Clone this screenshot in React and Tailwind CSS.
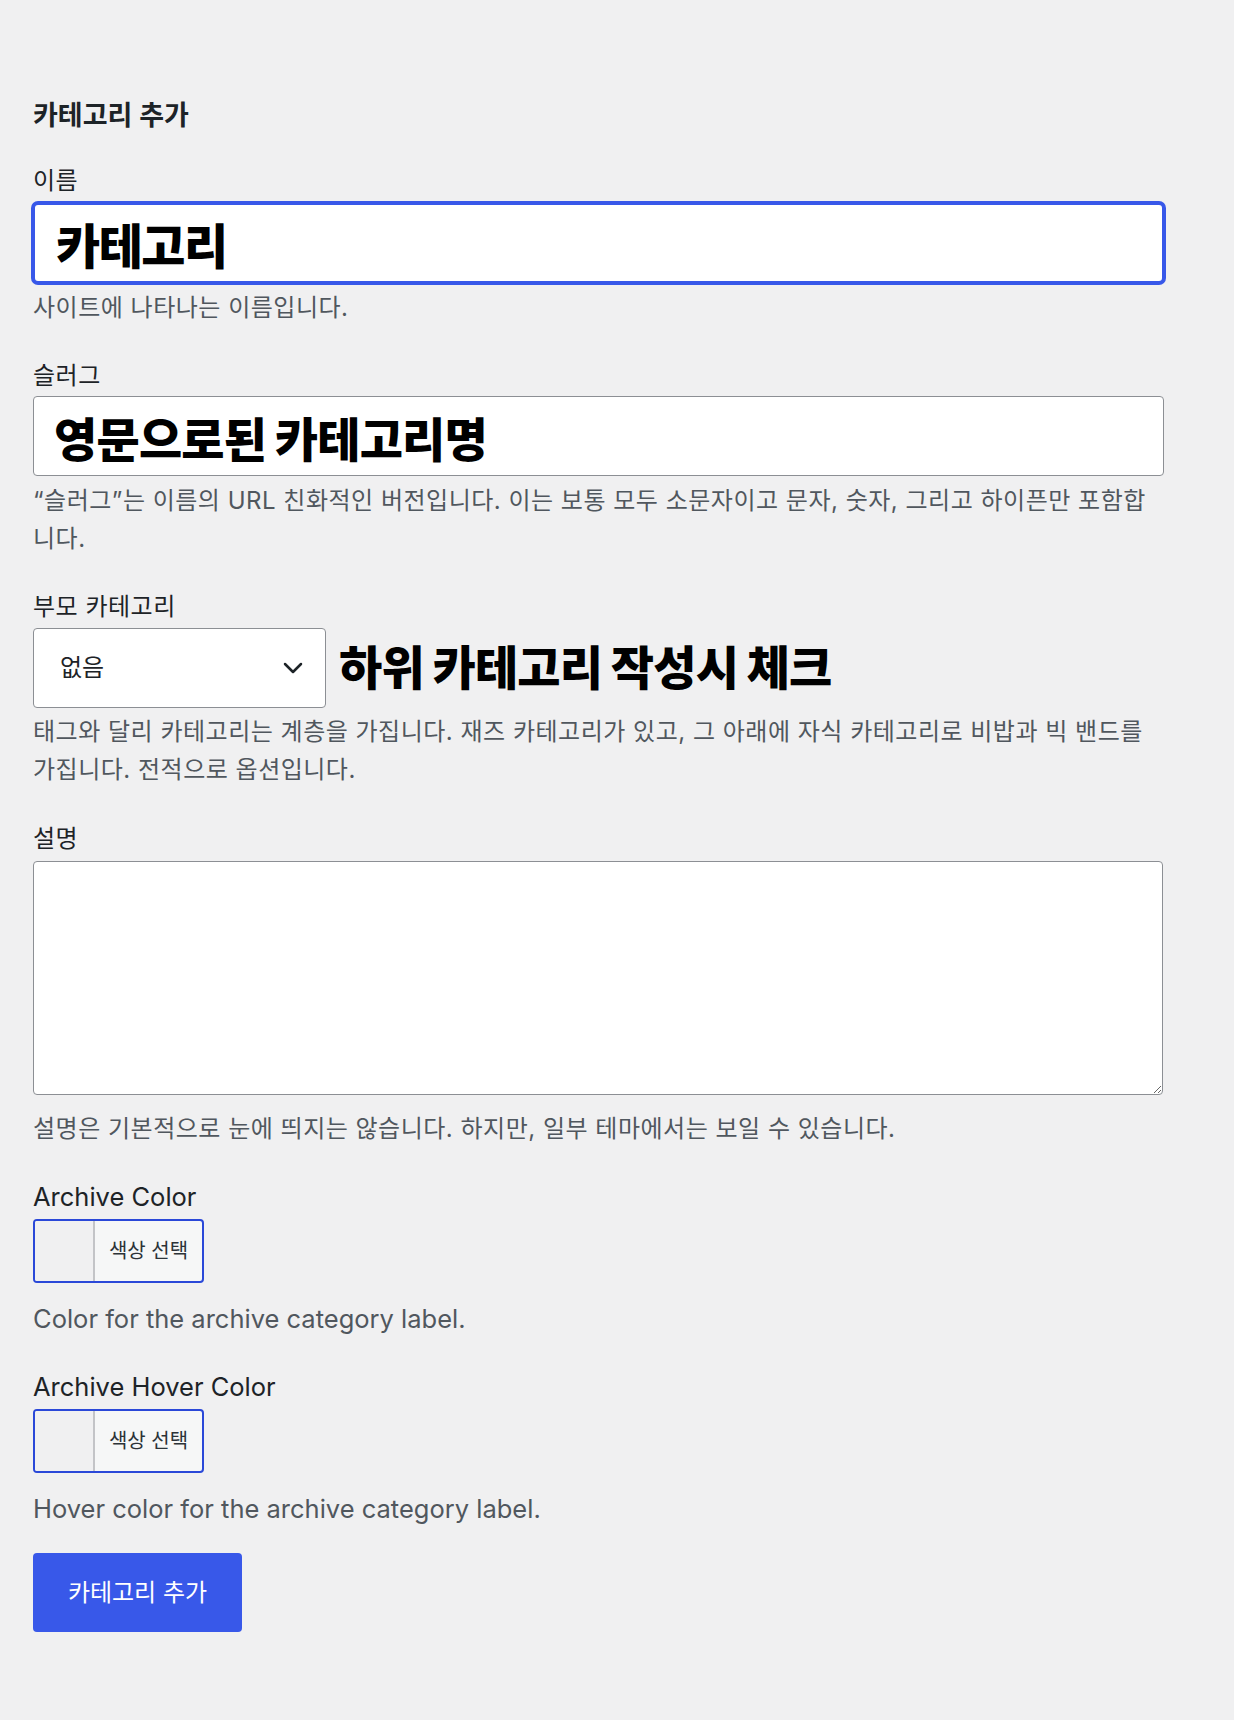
import React from 'react';

const Label = ({ children, en }) => (
    <label className={`block leading-[32px] text-[#1d2327] ${en ? 'text-[25.5px]' : 'text-[24px] tracking-[0.5px]'}`}>{children}</label>
);

const Desc = ({ children, en, className = '' }) => (
    <p className={`leading-[38px] text-[#50575e] ${en ? 'text-[25.5px]' : 'text-[24px] tracking-[0.5px]'} ${className}`}>{children}</p>
);

const ColorButton = () => (
    <button className="flex h-[64px] w-[171px] overflow-hidden rounded-[4px] border-2 border-[#2a48d8] bg-[#f6f7f7]">
        <span className="h-full w-[60px] border-r-2 border-[#c3c4c7] bg-[#f0f0f1]" />
        <span className="flex flex-1 items-center justify-center text-[20px] text-[#2c3338]">색상 선택</span>
    </button>
);

export default function App() {
    return (
        <div className="min-h-[1720px] bg-[#f0f0f1] [font-family:Inter,'Noto_Sans_CJK_KR',sans-serif] text-[#1d2327]">
            <div className="w-[1164px] pl-[33px] pt-[98px]">
                <h2 className="text-[27px] font-semibold leading-[36px]">카테고리 추가</h2>

                <div className="mt-[31px]">
                    <Label>이름</Label>
                    <input
                        readOnly
                        value="카테고리"
                        className="mt-[6px] block h-[80px] w-[1131px] rounded-[5px] border-2 border-[#3858e9] bg-white pl-[21px] text-[48px] font-black tracking-[-1.5px] text-black shadow-[0_0_0_2px_#3858e9] outline-none"
                    />
                    <Desc className="mt-[6px]">사이트에 나타나는 이름입니다.</Desc>
                </div>

                <div className="mt-[33px]">
                    <Label>슬러그</Label>
                    <input
                        readOnly
                        value="영문으로된 카테고리명"
                        className="mt-[4px] block h-[80px] w-[1131px] rounded-[4px] border border-[#8c8f94] bg-white pl-[20px] text-[47px] font-black tracking-[-0.8px] text-black outline-none"
                    />
                    <Desc className="mt-[6px] w-[1131px]">
                        “슬러그”는 이름의 URL 친화적인 버전입니다. 이는 보통 모두 소문자이고 문자, 숫자, 그리고 하이픈만 포함합니다.
                    </Desc>
                </div>

                <div className="mt-[33px]">
                    <Label>부모 카테고리</Label>
                    <div className="mt-[5px] flex items-center gap-[13px]">
                        <div className="flex h-[80px] w-[293px] items-center justify-between rounded-[4px] border border-[#8c8f94] bg-white pl-[26px] pr-[22px] text-[24px] text-[#1d2327]">
                            <span>없음</span>
                            <svg width="20" height="12" viewBox="0 0 20 12" fill="none">
                                <polyline points="2,2 10,10 18,2" stroke="#1d2327" strokeWidth="2.5" strokeLinecap="round" strokeLinejoin="round" />
                            </svg>
                        </div>
                        <span className="text-[47px] font-black tracking-[-0.8px] text-black">하위 카테고리 작성시 체크</span>
                    </div>
                    <Desc className="mt-[5px] w-[1131px]">
                        태그와 달리 카테고리는 계층을 가집니다. 재즈 카테고리가 있고, 그 아래에 자식 카테고리로 비밥과 빅 밴드를 가집니다. 전적으로 옵션입니다.
                    </Desc>
                </div>

                <div className="mt-[34px]">
                    <Label>설명</Label>
                    <textarea className="mt-[6px] block h-[234px] w-[1130px] rounded-[4px] border border-[#8c8f94] bg-white outline-none" />
                    <Desc className="mt-[15px]">설명은 기본적으로 눈에 띄지는 않습니다. 하지만, 일부 테마에서는 보일 수 있습니다.</Desc>
                </div>

                <div className="mt-[33px]">
                    <Label en>Archive Color</Label>
                    <div className="mt-[6px]">
                        <ColorButton />
                    </div>
                    <Desc en className="mt-[17px]">Color for the archive category label.</Desc>
                </div>

                <div className="mt-[33px]">
                    <Label en>Archive Hover Color</Label>
                    <div className="mt-[6px]">
                        <ColorButton />
                    </div>
                    <Desc en className="mt-[17px]">Hover color for the archive category label.</Desc>
                </div>

                <button className="mt-[25px] h-[79px] w-[209px] rounded-[4px] bg-[#3858e9] text-[24px] text-white">
                    카테고리 추가
                </button>
            </div>
        </div>
    );
}
